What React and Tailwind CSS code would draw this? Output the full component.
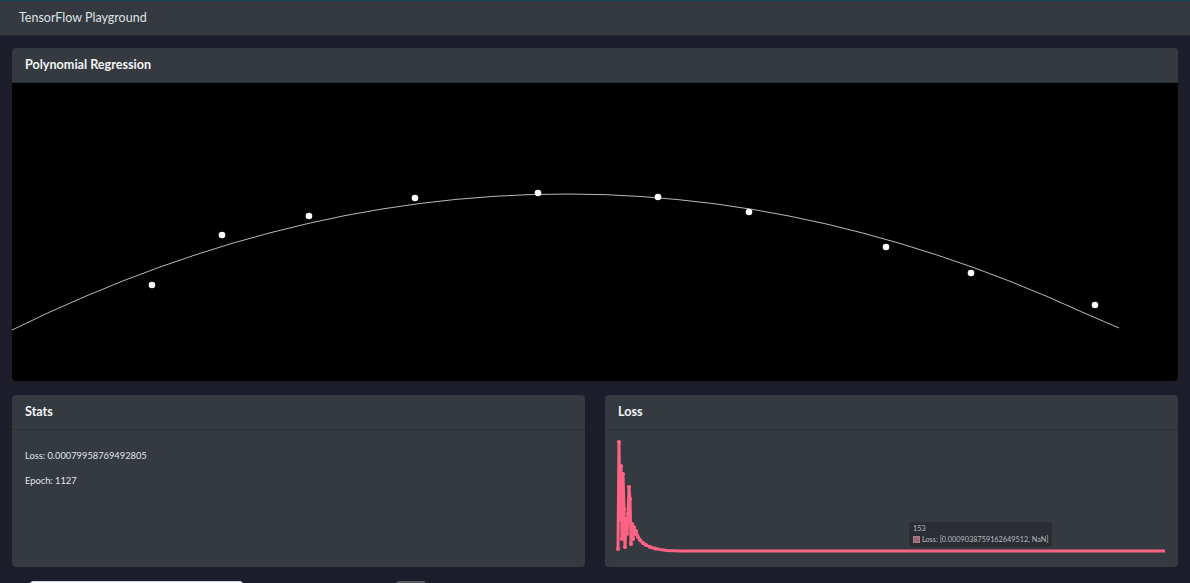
const POINTS = [
  [152, 285], [222, 235], [309, 216], [415, 198], [538, 193],
  [658, 197], [749, 212], [886, 247], [971, 273], [1095, 305],
]

function fitCurve() {
  const pts = []
  for (let x = 12; x < 1119; x += 37) {
    pts.push([x, 0.000443 * (x - 566) ** 2 + 194])
  }
  pts.push([1119, 328])
  return pts.map(p => `${p[0]},${p[1].toFixed(1)}`).join(' ')
}

const LOSS = [
  [618, 550], [619, 443], [620, 520], [620, 470], [621, 467], [622, 540],
  [623, 475], [624, 510], [625, 548], [626, 520], [627, 535], [628, 515],
  [629, 488], [630, 500], [631, 545], [632, 525], [633, 540], [634, 528],
  [635, 535], [636, 532], [638, 538], [640, 541], [643, 544], [646, 546],
  [650, 548], [655, 549.5], [660, 550.5], [667, 551.5], [680, 552], [1165, 552],
]

const FONT = { fontFamily: 'Lato, "Noto Sans", sans-serif' }

function Card({ title, children, className = '' }) {
  return (
    <div className={`flex flex-col rounded-[4px] bg-[#343a40] overflow-hidden ${className}`}>
      <div className="h-[35px] shrink-0 flex items-center px-[13px] border-b border-[#2c3035]">
        <span className="text-[12.6px] font-bold text-[#f3f4f6]">{title}</span>
      </div>
      {children}
    </div>
  )
}

function RegressionPlot() {
  return (
    <svg className="block bg-black" width="1166" height="298" viewBox="12 83 1166 298">
      <polyline points={fitCurve()} fill="none" stroke="#b9b9b9" strokeWidth="1" />
      {POINTS.map(([x, y], i) => (
        <circle key={i} cx={x} cy={y} r="3.3" fill="#fff" />
      ))}
    </svg>
  )
}

function LossChart() {
  const line = LOSS.map(p => p.join(',')).join(' ')
  return (
    <div className="relative flex-1">
      <svg className="block" width="573" height="136" viewBox="605 431 573 136">
        <polyline points={line} fill="none" stroke="#ff6384" strokeWidth="3" strokeLinejoin="round" />
        {LOSS.slice(0, 26).map(([x, y], i) => (
          <circle key={i} cx={x} cy={y} r="2" fill="#ff6384" />
        ))}
      </svg>
      <div className="absolute left-[304px] top-[92px] w-[143px] h-[25px] rounded-[3px] bg-[#2a2e33] px-[4px] pt-[1px] text-[7.3px] leading-[11px] text-[#b8bcc0] whitespace-nowrap">
        <div>153</div>
        <div className="flex items-center gap-[2px]">
          <span className="shrink-0 w-[7px] h-[7px] bg-[#9a6b7b] border border-[#b07a8a]" />
          <span>Loss: [0.0009038759162649512, NaN]</span>
        </div>
      </div>
    </div>
  )
}

export default function App() {
  return (
    <div className="h-[583px] overflow-hidden bg-[#1e1d2c]" style={FONT}>
      <div className="h-[36px] bg-[#343a40] border-t border-[#0f4a50] border-b border-b-[#27262f] flex items-center px-[19px]">
        <span className="text-[12.5px] text-[#dfe2e6]">TensorFlow Playground</span>
      </div>
      <div className="px-[12px] pt-[12px] flex flex-col gap-[14px]">
        <Card title="Polynomial Regression">
          <RegressionPlot />
        </Card>
        <div className="grid grid-cols-2 gap-[20px]">
          <Card title="Stats" className="h-[172px]">
            <div className="px-[13px] pt-[20px] text-[9.3px] leading-[12px] text-[#e3e5e8] flex flex-col gap-[13px]">
              <p>Loss: 0.00079958769492805</p>
              <p>Epoch: 1127</p>
            </div>
          </Card>
          <Card title="Loss" className="h-[172px]">
            <LossChart />
          </Card>
        </div>
        <div className="flex items-start pl-[18px]">
          <div className="w-[213px] h-[30px] bg-white border border-[#ced4da] rounded-[3px]" />
          <div className="ml-[153px] w-[30px] h-[30px] bg-[#555a60] rounded-[3px]" />
        </div>
      </div>
    </div>
  )
}
